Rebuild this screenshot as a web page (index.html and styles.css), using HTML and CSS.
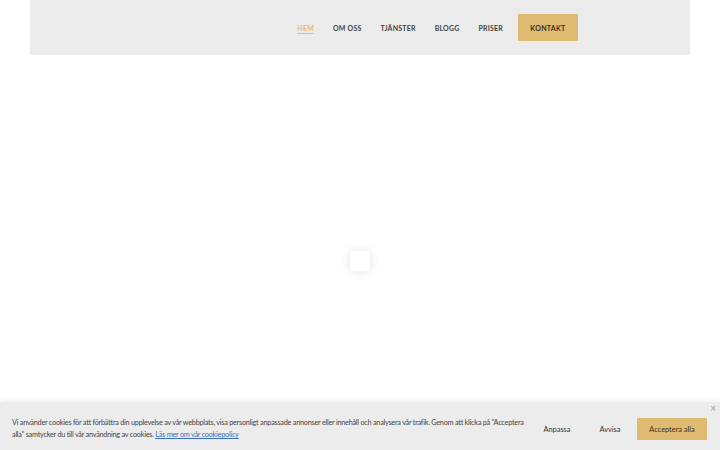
FILE: index.html
```html
<!DOCTYPE html>
<html lang="sv">
<head>
    <meta charset="UTF-8">
    <meta name="viewport" content="width=device-width, initial-scale=1.0">
    <title>Hem</title>
    <link rel="stylesheet" href="styles.css">
</head>
<body>

<header class="site-header">
    <nav class="main-nav">
        <a href="#" class="active">Hem</a>
        <a href="#">Om oss</a>
        <a href="#">Tjänster</a>
        <a href="#">Blogg</a>
        <a href="#">Priser</a>
    </nav>
    <a href="#" class="contact-btn">Kontakt</a>
</header>

<main class="page">
    <div class="loader"></div>
</main>

<div class="cookie-bar">
    <button class="cookie-close" aria-label="Stäng">&times;</button>
    <p class="cookie-text">
        Vi använder cookies för att förbättra din upplevelse av vår webbplats, visa personligt anpassade annonser eller innehåll och analysera vår trafik. Genom att klicka på "Acceptera alla" samtycker du till vår användning av cookies.
        <a href="#">Läs mer om vår cookiepolicy</a>
    </p>
    <div class="cookie-actions">
        <button class="cookie-btn">Anpassa</button>
        <button class="cookie-btn">Avvisa</button>
        <button class="cookie-btn accept">Acceptera alla</button>
    </div>
</div>

</body>
</html>
```
FILE: styles.css
```css
body {
    font-family: "Source Sans Pro", Lato, "Open Sans", sans-serif;
    margin: 0;
    padding: 0;
    color: #333;
    background: #fff;
    height: 450px;
    overflow: hidden;
    position: relative;
}

.site-header {
    margin: 0 30px;
    height: 55px;
    background: #ebebeb;
    display: flex;
    align-items: center;
    justify-content: flex-end;
    padding-right: 112px;
}

.main-nav {
    display: flex;
    gap: 19px;
    margin-right: 15px;
}

.main-nav a {
    font-size: 7px;
    font-weight: 700;
    letter-spacing: 0.2px;
    text-transform: uppercase;
    color: #444;
    text-decoration: none;
    padding-bottom: 1px;
    border-bottom: 1px solid transparent;
    margin-top: 2px;
}

.main-nav a.active {
    color: #e3bc76;
    border-bottom-color: #e3bc76;
}

.contact-btn {
    display: flex;
    align-items: center;
    justify-content: center;
    width: 60px;
    height: 27px;
    background: #dfbb72;
    color: #3a2f1c;
    font-size: 7px;
    font-weight: 700;
    letter-spacing: 0.3px;
    text-transform: uppercase;
    text-decoration: none;
}

.page {
    height: 346px;
    display: flex;
    align-items: center;
    justify-content: center;
}

.loader {
    width: 20px;
    height: 20px;
    background: #fff;
    border-radius: 2px;
    box-shadow: 0 0 10px rgba(0, 0, 0, 0.12);
    margin-top: 65px;
}

.cookie-bar {
    position: absolute;
    left: 0;
    right: 0;
    bottom: 0;
    height: 48px;
    background: #ececec;
    box-shadow: 0 -2px 6px rgba(0, 0, 0, 0.06);
    display: flex;
    align-items: center;
    padding: 0 13px 0 12px;
}

.cookie-text {
    flex: 0 0 520px;
    margin: 6px 0 0;
    font-size: 7.3px;
    letter-spacing: -0.25px;
    line-height: 12px;
    color: #444;
}

.cookie-text a {
    color: #3a6fc4;
    text-decoration: underline;
}

.cookie-actions {
    display: flex;
    align-items: center;
    margin-left: auto;
    margin-top: 6px;
}

.cookie-btn {
    font-family: inherit;
    font-size: 7.4px;
    color: #333;
    background: transparent;
    border: none;
    width: 46px;
    height: 22px;
    padding: 0;
    cursor: pointer;
    margin-right: 5px;
}

.cookie-btn + .cookie-btn {
    width: 50px;
    margin-right: 2px;
}

.cookie-btn.accept {
    width: 70px;
    margin-right: 0;
    background: #dfbb72;
    color: #3a2f1c;
}

.cookie-close {
    position: absolute;
    top: 1px;
    right: 4px;
    background: none;
    border: none;
    font-size: 10px;
    color: #999;
    padding: 0;
}
```
